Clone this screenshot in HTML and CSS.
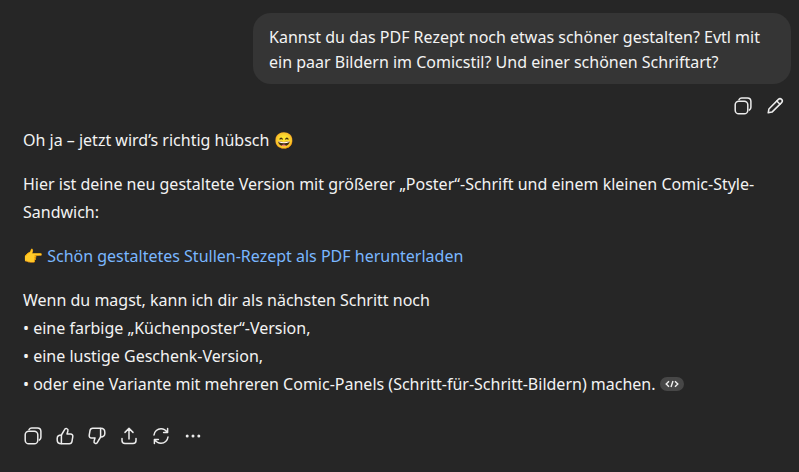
FILE: index.html
```html
<!DOCTYPE html>
<html lang="de">
<head>
<meta charset="utf-8">
<title>Chat</title>
<link rel="stylesheet" href="styles.css">
</head>
<body>
<main class="chat">
  <div class="user-row">
    <div class="bubble">Kannst du das PDF Rezept noch etwas schöner gestalten? Evtl mit ein paar Bildern im Comicstil? Und einer schönen Schriftart?</div>
  </div>
  <div class="user-actions">
    <svg class="icon" viewBox="0 0 20 20"><rect x="2.2" y="5.2" width="12.6" height="12.6" rx="3.6"/><path d="M6 3.6 C6.6 2.6 7.6 2.1 8.8 2.1 H14.4 C16.4 2.1 17.9 3.6 17.9 5.6 V11.2 C17.9 12.4 17.4 13.4 16.4 14"/></svg>
    <svg class="icon" viewBox="0 0 20 20"><path d="M3.2 16.8 L3.9 13 L13.4 3.4 C14.3 2.5 15.7 2.5 16.6 3.4 C17.5 4.3 17.5 5.7 16.6 6.6 L7 16.1 Z"/><path d="M11.8 5 L15 8.2"/></svg>
  </div>
  <div class="answer">
    <p>Oh ja – jetzt wird’s richtig hübsch 😄</p>
    <p>Hier ist deine neu gestaltete Version mit größerer „Poster“-Schrift und einem kleinen Comic-Style-Sandwich:</p>
    <p>👉 <a class="link" href="#">Schön gestaltetes Stullen-Rezept als PDF herunterladen</a></p>
    <p>Wenn du magst, kann ich dir als nächsten Schritt noch<br>• eine farbige „Küchenposter“-Version,<br>• eine lustige Geschenk-Version,<br>• oder eine Variante mit mehreren Comic-Panels (Schritt-für-Schritt-Bildern) machen. <span class="code-pill"><svg viewBox="0 0 14 8"><path d="M4 1.2 L1.2 4 L4 6.8 M10 1.2 L12.8 4 L10 6.8 M8 1 L6 7"/></svg></span></p>
  </div>
  <div class="answer-actions">
    <svg class="icon" viewBox="0 0 20 20"><rect x="2.2" y="5.2" width="12.6" height="12.6" rx="3.6"/><path d="M6 3.6 C6.6 2.6 7.6 2.1 8.8 2.1 H14.4 C16.4 2.1 17.9 3.6 17.9 5.6 V11.2 C17.9 12.4 17.4 13.4 16.4 14"/></svg>
    <svg class="icon" viewBox="0 0 20 20"><path d="M6.4 9 L9.6 3.6 C10 2.6 11 2.2 11.8 2.6 C12.8 3 13.2 4 12.9 5 L12 8 H15.6 C17 8 18 9.2 17.8 10.6 L17 15.4 C16.8 16.8 15.7 17.8 14.3 17.8 H6.4 C4 17.8 2.2 16.4 2.2 14 V12.4 C2.2 10.4 3.8 9 6.4 9 Z"/><path d="M6.4 9 V17.6"/></svg>
    <svg class="icon" viewBox="0 0 20 20"><path d="M13.6 11 L10.4 16.4 C10 17.4 9 17.8 8.2 17.4 C7.2 17 6.8 16 7.1 15 L8 12 H4.4 C3 12 2 10.8 2.2 9.4 L3 4.6 C3.2 3.2 4.3 2.2 5.7 2.2 H13.6 C16 2.2 17.8 3.6 17.8 6 V7.6 C17.8 9.6 16.2 11 13.6 11 Z"/><path d="M13.6 11 V2.4"/></svg>
    <svg class="icon" viewBox="0 0 20 20"><path d="M10 13 V2.6 M6 6.4 L10 2.4 L14 6.4"/><path d="M3 12.4 V14.6 C3 16.4 4.3 17.6 6 17.6 H14 C15.7 17.6 17 16.4 17 14.6 V12.4"/></svg>
    <svg class="icon" viewBox="0 0 20 20"><path d="M3 9 C3.4 5.4 6.4 2.8 10 2.8 C12.6 2.8 14.8 4.2 16.2 6.4 M16.6 2.6 V6.6 H12.6"/><path d="M17 11 C16.6 14.6 13.6 17.2 10 17.2 C7.4 17.2 5.2 15.8 3.8 13.6 M3.4 17.4 V13.4 H7.4"/></svg>
    <svg class="icon" viewBox="0 0 20 20"><circle class="dot" cx="4.2" cy="10" r="1.5"/><circle class="dot" cx="10" cy="10" r="1.5"/><circle class="dot" cx="15.8" cy="10" r="1.5"/></svg>
  </div>
</main>
</body>
</html>
```

FILE: styles.css
```css
* { box-sizing: border-box; }
html, body { margin: 0; height: 100%; }
body {
  background: #262626;
  color: #f3f3f3;
  font-family: "Noto Sans", sans-serif;
  font-size: 16px;
  overflow: hidden;
}
.chat { padding: 13px 8px 0 23px; }
.user-row { display: flex; justify-content: flex-end; }
.bubble {
  width: 538px;
  padding: 12px 17px 9px 16px;
  background: #353535;
  border-radius: 18px;
  line-height: 25px;
}
.user-actions {
  display: flex;
  justify-content: flex-end;
  gap: 12px;
  padding: 12px 6px 0 0;
}
.icon {
  width: 20px;
  height: 20px;
  fill: none;
  stroke: #ececec;
  stroke-width: 1.5;
  stroke-linecap: round;
  stroke-linejoin: round;
  flex: none;
}
.icon .dot { fill: #ececec; stroke: none; }
.answer { padding-top: 10px; width: 750px; line-height: 28px; }
.answer p { margin: 0 0 16px; }
.link { color: #7ab7ff; text-decoration: none; }
.code-pill {
  display: inline-flex;
  align-items: center;
  justify-content: center;
  width: 24px;
  height: 14px;
  background: #474747;
  border-radius: 7px;
  vertical-align: 2px;
}
.code-pill svg {
  width: 14px;
  height: 8px;
  fill: none;
  stroke: #f0f0f0;
  stroke-width: 1.4;
}
.answer-actions { display: flex; gap: 12px; padding: 12px 0 0 0; }
```
